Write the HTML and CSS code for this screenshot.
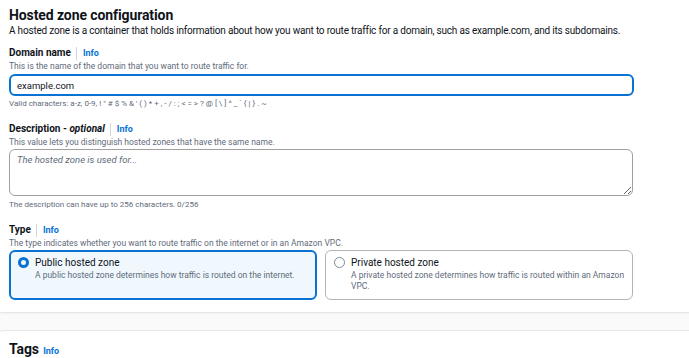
FILE: index.html
```html
<!DOCTYPE html>
<html lang="en">
<head>
    <meta charset="UTF-8">
    <title>Create hosted zone</title>
    <link rel="stylesheet" href="styles.css">
</head>
<body>
    <div class="page">
        <section class="card">
            <h2>Hosted zone configuration</h2>
            <p class="lead">A hosted zone is a container that holds information about how you want to route traffic for a domain, such as example.com, and its subdomains.</p>

            <div class="field">
                <div class="label">Domain name <a class="info">Info</a></div>
                <div class="hint">This is the name of the domain that you want to route traffic for.</div>
                <input class="input focused" type="text" value="example.com">
                <div class="constraint">Valid characters: a-z, 0-9, ! " # $ % &amp; ' ( ) * + , - / : ; &lt; = &gt; ? @ [ \ ] ^ _ ` { | } . ~</div>
            </div>

            <div class="field">
                <div class="label">Description -&nbsp;<i>optional</i> <a class="info">Info</a></div>
                <div class="hint">This value lets you distinguish hosted zones that have the same name.</div>
                <textarea class="input area" placeholder="The hosted zone is used for..."></textarea>
                <div class="constraint">The description can have up to 256 characters. 0/256</div>
            </div>

            <div class="field">
                <div class="label">Type <a class="info">Info</a></div>
                <div class="hint">The type indicates whether you want to route traffic on the internet or in an Amazon VPC.</div>
                <div class="tiles">
                    <label class="tile selected">
                        <span class="radio"></span>
                        <span>
                            <span class="tile-title">Public hosted zone</span>
                            <span class="tile-desc">A public hosted zone determines how traffic is routed on the internet.</span>
                        </span>
                    </label>
                    <label class="tile">
                        <span class="radio"></span>
                        <span>
                            <span class="tile-title">Private hosted zone</span>
                            <span class="tile-desc">A private hosted zone determines how traffic is routed within an Amazon VPC.</span>
                        </span>
                    </label>
                </div>
            </div>
        </section>

        <section class="card">
            <h2 class="tags">Tags <a class="info">Info</a></h2>
        </section>
    </div>
</body>
</html>
```

FILE: styles.css
```css
* {
    margin: 0;
    padding: 0;
    box-sizing: border-box;
}

body {
    font-family: Roboto, "Liberation Sans", sans-serif;
    background: #fafafa;
    color: #0f141a;
    overflow: hidden;
}

.page {
    margin-left: -12px;
    width: 740px;
    display: flex;
    flex-direction: column;
    gap: 17px;
}

.card {
    background: #fff;
    border: 1px solid #e6e6e6;
    border-top: none;
    border-radius: 0 0 16px 16px;
    padding: 6px 0 12px 20px;
    box-shadow: 0 1px 2px rgba(0, 0, 0, 0.04);
}

.card + .card {
    border-top: 1px solid #e6e6e6;
    border-radius: 16px 16px 0 0;
    padding-top: 9px;
    min-height: 40px;
}

h2 {
    font-size: 14px;
    font-weight: 700;
    line-height: 18px;
    letter-spacing: -0.1px;
}

.lead {
    font-size: 10px;
    line-height: 14px;
    letter-spacing: -0.2px;
    margin-bottom: 8px;
}

.label {
    font-size: 10px;
    font-weight: 700;
    line-height: 14px;
    display: flex;
    align-items: center;
}

.info {
    color: #0972d3;
    font-size: 9px;
    font-weight: 700;
    border-left: 1px solid #d1d5db;
    margin-left: 5px;
    padding-left: 6px;
    line-height: 13px;
}

.tags .info {
    border: none;
    margin-left: 1px;
    padding-left: 0;
}

.hint {
    font-size: 8.5px;
    color: #5f6b7a;
    line-height: 12px;
    margin-bottom: 2px;
}

.input {
    display: block;
    width: 625px;
    height: 22px;
    border: 1px solid #a0a0a0;
    border-radius: 6px;
    padding: 2px 7px;
    font-family: inherit;
    font-size: 9.5px;
    color: #0f141a;
    outline: none;
}

.input.focused {
    border: 2px solid #0972d3;
    padding: 2px 6px;
}

.area {
    width: 624px;
    height: 47px;
    margin-top: -1px;
    resize: vertical;
    padding-top: 4px;
}

.area::placeholder {
    font-style: italic;
    color: #5f6b7a;
}

.constraint {
    font-size: 8px;
    color: #5f6b7a;
    line-height: 12px;
    margin-top: 2px;
    margin-bottom: 12px;
}

.area + .constraint {
    margin-top: 3px;
}

.tiles {
    display: grid;
    grid-template-columns: 308px 308px;
    gap: 8px;
    margin-top: -1px;
}

.tile {
    display: flex;
    gap: 6px;
    align-items: flex-start;
    height: 50px;
    border: 1px solid #b4b4b4;
    border-radius: 6px;
    padding: 5px 5px 5px 8px;
}

.tile.selected {
    background: #f0f8fe;
    border: 2px solid #0972d3;
    padding: 4px 4px 4px 7px;
}

.radio {
    flex: none;
    width: 11px;
    height: 11px;
    border-radius: 50%;
    border: 1px solid #7d8998;
    margin-top: 1px;
}

.selected .radio {
    border: 3.5px solid #0972d3;
}

.tile-title {
    display: block;
    font-size: 10px;
    line-height: 14px;
}

.tile-desc {
    display: block;
    font-size: 8.5px;
    color: #5f6b7a;
    line-height: 11px;
}
```
